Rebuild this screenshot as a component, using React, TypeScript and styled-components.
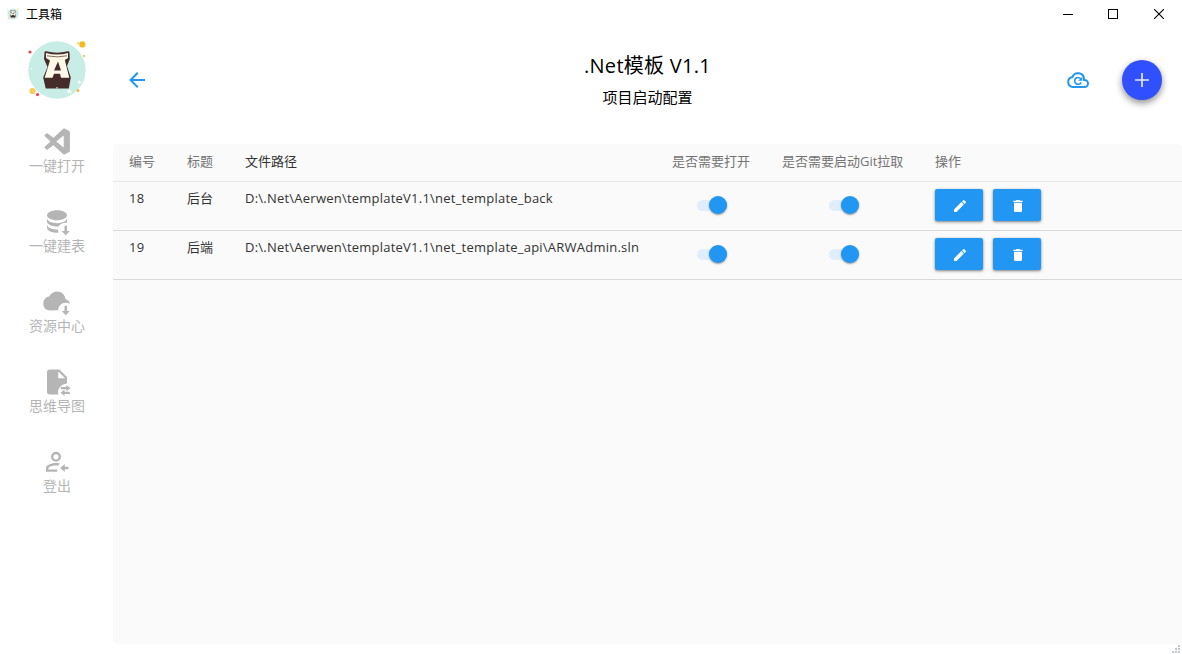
import React from 'react';
import styled, { createGlobalStyle } from 'styled-components';

const GlobalStyle = createGlobalStyle`
  * { box-sizing: border-box; }
  body {
    margin: 0;
    background: #fff;
    overflow: hidden;
    font-family: "Open Sans", "Noto Sans CJK SC", sans-serif;
    color: #000;
  }
`;

const Window = styled.div`
  width: 1182px;
  height: 654px;
  display: flex;
  flex-direction: column;
  position: relative;
`;

const TitleBar = styled.header`
  height: 28px;
  flex: none;
  display: flex;
  align-items: center;
  padding-left: 7px;
  font-family: "Noto Sans CJK SC", sans-serif;
  font-size: 12px;
`;

const WindowTitle = styled.span`
  margin-left: 7px;
  flex: 1;
  line-height: 16px;
`;

const WindowButtons = styled.div`
  display: flex;
  height: 28px;
  align-items: center;
`;

const WindowButton = styled.span<{ $w: number }>`
  width: ${p => p.$w}px;
  display: flex;
  justify-content: center;
`;

const Body = styled.div`
  flex: 1;
  display: flex;
  min-height: 0;
`;

const Sidebar = styled.nav`
  width: 113px;
  flex: none;
  display: flex;
  flex-direction: column;
  align-items: center;
  padding: 11px 0 0 1px;
`;

const NavList = styled.div`
  display: flex;
  flex-direction: column;
  gap: 31px;
  margin-top: 25px;
`;

const NavItem = styled.a`
  height: 49px;
  display: flex;
  flex-direction: column;
  align-items: center;
  color: #b5b5b5;
  font-family: "Noto Sans CJK SC", sans-serif;
  font-size: 14px;
  line-height: 20px;
  white-space: nowrap;
  svg {
    display: block;
    margin-bottom: -1px;
  }
`;

const Main = styled.main`
  flex: 1;
  display: flex;
  flex-direction: column;
`;

const PageHeader = styled.div`
  height: 116px;
  display: flex;
  align-items: center;
  padding: 0 20px 12px 12px;
`;

const HeaderIcon = styled.span`
  display: flex;
  color: #2196f3;
`;

const Titles = styled.div`
  flex: 1;
  display: flex;
  flex-direction: column;
  align-items: center;
  padding: 1px 0 0 80px;
`;

const Title = styled.h1`
  margin: 0;
  font-size: 20px;
  font-weight: 400;
  line-height: 32px;
  letter-spacing: 0.28px;
`;

const SubTitle = styled.h2`
  margin: 0;
  font-size: 15px;
  font-weight: 400;
  line-height: 30px;
`;

const Fab = styled.button`
  margin-left: 32px;
  width: 40px;
  height: 40px;
  padding: 0;
  border: 0;
  border-radius: 50%;
  background: #304ffe;
  color: #e4e8ff;
  display: flex;
  align-items: center;
  justify-content: center;
  box-shadow: 0 3px 7px rgba(0, 0, 0, 0.45);
`;

const Panel = styled.section`
  height: 500px;
  background: #fafafa;
  border-radius: 4px;
  font-size: 13px;
`;

const Row = styled.div<{ $head?: boolean }>`
  display: grid;
  grid-template-columns: 58px 58px 427px 110px 153px 1fr;
  height: ${p => (p.$head ? 38 : 49)}px;
  border-bottom: 1px solid ${p => (p.$head ? '#e8e8e8' : '#d9d9d9')};
  color: ${p => (p.$head ? '#737373' : '#333')};
`;

const Cell = styled.div<{ $top?: number; $dark?: boolean; $spaced?: boolean }>`
  padding: ${p => p.$top ?? 6}px 0 0 16px;
  line-height: 20px;
  white-space: nowrap;
  ${p => p.$dark && 'color: #333;'}
  ${p => p.$spaced && 'letter-spacing: 0.23px;'}
`;

const SwitchCell = styled.div<{ $left: number }>`
  padding: 18px 0 0 ${p => p.$left}px;
`;

const Track = styled.div`
  width: 30px;
  height: 11px;
  display: flex;
  align-items: center;
  justify-content: flex-end;
  background: #e0eefb;
  border-radius: 6px;
`;

const Thumb = styled.span`
  flex: none;
  width: 18px;
  height: 18px;
  margin-bottom: 1px;
  border-radius: 50%;
  background: #2196f3;
  box-shadow: 0 1px 2px rgba(0, 0, 0, 0.4);
`;

const Actions = styled.div`
  display: flex;
  gap: 10px;
  padding: 7px 0 0 16px;
`;

const ActionButton = styled.button`
  width: 48px;
  height: 32px;
  padding: 2px 0 0 1px;
  border: 0;
  border-radius: 2px;
  background: #2196f3;
  color: #fff;
  display: flex;
  align-items: center;
  justify-content: center;
  box-shadow: 0 1px 3px rgba(0, 0, 0, 0.5);
`;

const Grip = styled.svg`
  position: absolute;
  right: 2px;
  bottom: 0;
`;

const Icon = ({ d, size = 24, box = '0 0 24 24' }: { d: string; size?: number; box?: string }) => (
  <svg width={size} height={size} viewBox={box} fill="currentColor" fillRule="evenodd">
    <path d={d} />
  </svg>
);

const icons = {
  back: 'M20 11V13H8L13.5 18.5L12.08 19.92L4.16 12L12.08 4.08L13.5 5.5L8 11H20Z',
  plus: 'M19 12.85H12.85V19H11.15V12.85H5V11.15H11.15V5H12.85V11.15H19V12.85Z',
  pencil:
    'M20.71 7.04C21.1 6.65 21.1 6 20.71 5.63L18.37 3.29C18 2.9 17.35 2.9 16.96 3.29L15.12 5.12L18.87 8.87M3 17.25V21H6.75L17.81 9.93L14.06 6.18L3 17.25Z',
  trash: 'M19 4H15.5L14.5 3H9.5L8.5 4H5V6H19M6 19A2 2 0 0 0 8 21H16A2 2 0 0 0 18 19V7H6V19Z',
  database:
    'M12 3C7.58 3 4 4.79 4 7S7.58 11 12 11 20 9.21 20 7 16.42 3 12 3ZM4 9.2V12C4 14.2 7.58 16 12 16L13.2 15.9C14.3 14.1 16.8 12.8 20 13V9.2C20 11.5 16.4 13.3 12 13.3S4 11.5 4 9.2ZM4 14.2V17C4 19.2 7.58 21 12 21H13.1L12.8 18.3C8 18.8 4 16.8 4 14.2ZM18 15.3H20V19.6H22.4L19 23L15.6 19.6H18Z',
  cloud:
    'M13 19C13 15.7 15.7 13 19 13C20.3 13 21.4 13.4 22.4 14.1C21.9 11.8 20.9 10.6 19 10.3C18.4 6.6 15.6 4 12.1 4C9.3 4 6.9 5.6 5.7 8C2.8 8.4 1 10.9 1 13.8C1 17 3.5 19.2 6.8 19.2ZM18 15.3H20V19.6H22.2L19 23L15.8 19.6H18Z',
  file:
    'M6 2C4.9 2 4 2.9 4 4V20C4 21.1 4.9 22 6 22H13.2C12 18.5 14.2 14 20 13.2V8L14 2ZM13 3.5L18.5 9H13ZM19.5 14.4V16H15V17.8H19.5V19.3L22.7 16.9ZM18 18L14.8 20.6L18 23.2V21.5H22.3V19.8H18Z',
  account:
    'M12 4A4 4 0 1 1 12 12A4 4 0 0 1 12 4M12 5.9A2.1 2.1 0 1 0 12 10.1A2.1 2.1 0 0 0 12 5.9M12 13C12.9 13 14 13.1 15 13.4L13.5 15.1C10 14.5 5.9 16 5.9 17V18.1H13V20H4V17C4 14.3 9.3 13 12 13M19 13.8V16H22V18H19V20.2L15.3 17Z',
};

const CodeIcon = () => (
  <svg width="30" height="30" viewBox="-0.5 0 30 30">
    <path
      fill="currentColor"
      fillRule="evenodd"
      d="M22 2.6L26.7 5Q27.4 5.4 27.4 6.2V24.8Q27.4 25.6 26.7 26L22 28.4Q21.2 28.7 20.5 28L11 19.2L5.2 23.5Q4.5 24 3.8 23.4L2.3 22Q1.8 21.4 2.3 20.8L8 15.5L2.3 10.2Q1.8 9.6 2.3 9L3.8 7.6Q4.5 7 5.2 7.5L11 11.8L20.5 3Q21.2 2.3 22 2.6ZM21.2 9.5L13.7 15.5L21.2 21.5Z"
    />
  </svg>
);

const CloudRefresh = () => (
  <svg width="24" height="24" viewBox="0 0 24 24" fill="none" stroke="currentColor" strokeWidth="2">
    <path d="M6.5 19H18.5A3.5 3.5 0 0 0 18.5 12H18V11A6 6 0 0 0 6.4 9.1A5 5 0 0 0 6.5 19Z" />
    <path strokeWidth="1.6" d="M14.7 10.7A3.4 3.4 0 1 0 15.2 14.3" />
    <path stroke="none" fill="currentColor" d="M16.3 8.7V12.8H12.2Z" />
  </svg>
);

const Logo = ({ size }: { size: number }) => (
  <svg width={size} height={size} viewBox="0 0 62 62">
    <circle cx="31" cy="31" r="28.7" fill="#c8ece6" />
    <circle cx="56.3" cy="5.4" r="3.1" fill="#f3bb1b" />
    <circle cx="52" cy="4" r="1" fill="#f5cf6b" />
    <circle cx="58" cy="17" r="1" fill="#f3bb1b" />
    <circle cx="4" cy="13" r="1.6" fill="#ef4057" />
    <circle cx="6.5" cy="52" r="3.1" fill="#f9cc55" />
    <circle cx="11.5" cy="55.6" r="1.6" fill="#ef4057" />
    <circle cx="52" cy="51.5" r="1.5" fill="#f3bb45" />
    <circle cx="43.5" cy="52.3" r="1.9" fill="#fff" />
    <circle cx="53.3" cy="43" r="1.5" fill="#fff" />
    <circle cx="5.5" cy="29.5" r="0.7" fill="#fff" />
    <path fill="#452b29" d="M18.5 14Q18 12 20.3 12.3Q31 15 41.7 12.3Q44 12 43.5 14L43.8 20L41 27L44.8 38.5L42.8 49.4H19.7L17.2 38.5L21.5 28L18 20Z" />
    <path fill="#fff9e8" d="M20 14Q31 17 42 14L42 19L38.8 21L43.3 38.7H35L34 34.8H28L26.5 38.7H18.6L24 21.5L20 19Z" />
    <path fill="none" stroke="#452b29" strokeWidth="0.7" d="M21 16.8Q31 19 41 16.8" />
    <path fill="#452b29" d="M32 22.5L35 31.5H28Z" />
    <path fill="#c8ece6" d="M30.4 48H31.6V49.5H30.4Z" />
  </svg>
);

const navItems = [
  { label: '一键打开', icon: <CodeIcon /> },
  { label: '一键建表', icon: <Icon d={icons.database} size={30} box="0 -0.4 24 24" /> },
  { label: '资源中心', icon: <Icon d={icons.cloud} size={30} box="0 -0.4 24 24" /> },
  { label: '思维导图', icon: <Icon d={icons.file} size={30} box="0 -0.8 24 24" /> },
  { label: '登出', icon: <Icon d={icons.account} size={30} box="0.8 -0.6 24 24" /> },
];

const rows = [
  { id: 18, title: '后台', path: 'D:\\.Net\\Aerwen\\templateV1.1\\net_template_back' },
  { id: 19, title: '后端', path: 'D:\\.Net\\Aerwen\\templateV1.1\\net_template_api\\ARWAdmin.sln' },
];

const Switch = () => (
  <Track>
    <Thumb />
  </Track>
);

export default function App() {
  return (
    <>
      <GlobalStyle />
      <Window>
        <TitleBar>
          <Logo size={12} />
          <WindowTitle>工具箱</WindowTitle>
          <WindowButtons>
            <WindowButton $w={44}>
              <svg width="10" height="10"><path d="M0 5.5H10" stroke="#000" /></svg>
            </WindowButton>
            <WindowButton $w={46}>
              <svg width="10" height="10"><rect x="0.5" y="0.5" width="9" height="9" fill="none" stroke="#000" /></svg>
            </WindowButton>
            <WindowButton $w={46}>
              <svg width="10" height="10"><path d="M0 0L10 10M10 0L0 10" stroke="#000" strokeWidth="1.1" /></svg>
            </WindowButton>
          </WindowButtons>
        </TitleBar>
        <Body>
          <Sidebar>
            <Logo size={62} />
            <NavList>
              {navItems.map(item => (
                <NavItem key={item.label}>
                  {item.icon}
                  {item.label}
                </NavItem>
              ))}
            </NavList>
          </Sidebar>
          <Main>
            <PageHeader>
              <HeaderIcon><Icon d={icons.back} /></HeaderIcon>
              <Titles>
                <Title>.Net模板 V1.1</Title>
                <SubTitle>项目启动配置</SubTitle>
              </Titles>
              <HeaderIcon><CloudRefresh /></HeaderIcon>
              <Fab><Icon d={icons.plus} /></Fab>
            </PageHeader>
            <Panel>
              <Row $head>
                <Cell $top={7}>编号</Cell>
                <Cell $top={7}>标题</Cell>
                <Cell $top={7} $dark>文件路径</Cell>
                <Cell $top={7}>是否需要打开</Cell>
                <Cell $top={7}>是否需要启动Git拉取</Cell>
                <Cell $top={7}>操作</Cell>
              </Row>
              {rows.map(row => (
                <Row key={row.id}>
                  <Cell $spaced>{row.id}</Cell>
                  <Cell>{row.title}</Cell>
                  <Cell $spaced>{row.path}</Cell>
                  <SwitchCell $left={41}><Switch /></SwitchCell>
                  <SwitchCell $left={63}><Switch /></SwitchCell>
                  <Actions>
                    <ActionButton><Icon d={icons.pencil} size={16} /></ActionButton>
                    <ActionButton><Icon d={icons.trash} size={16} /></ActionButton>
                  </Actions>
                </Row>
              ))}
            </Panel>
          </Main>
        </Body>
        <Grip width="9" height="10" fill="#c3c9d4">
          <path d="M7 1h2v2h-2zM4 4h2v2h-2zM7 4h2v2h-2zM1 7h2v2h-2zM4 7h2v2h-2zM7 7h2v2h-2z" />
        </Grip>
      </Window>
    </>
  );
}
